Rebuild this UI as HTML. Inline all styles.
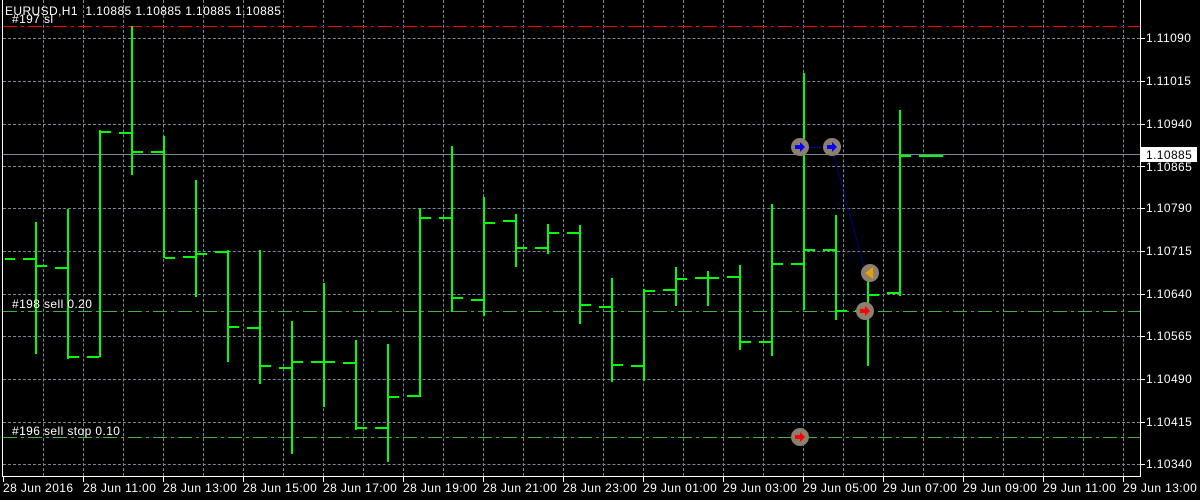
<!DOCTYPE html>
<html><head><meta charset="utf-8"><style>
html,body{margin:0;padding:0;background:#000;width:1200px;height:500px;overflow:hidden;position:relative}
div,b,i,s,u,span{position:absolute;display:block}
.t{font-family:"Liberation Sans",sans-serif;font-size:12px;letter-spacing:0.4px;color:#fff;white-space:nowrap;line-height:14px}
.h{left:3px;width:1137px;height:0;border-top:1px dashed #778899}
.vg{top:0;height:476px;width:0;border-left:1px dashed #778899}
b{background:#00ff00;width:2px}
i{background:#00ff00;height:2px;width:12px}
.c{width:18px;height:18px;border-radius:50%;background:#8c7f70}
.a{width:10px;height:10px;left:4px;top:4px;clip-path:polygon(0 30%,50% 30%,50% 0,100% 50%,50% 100%,50% 70%,0 70%)}
.yl{left:1146px}
.tk{left:1141px;width:4px;height:1px;background:#fff}
.dt{top:477px;width:1px;height:5px;background:#fff}
</style></head><body>
<div class="h" style="top:38px"></div><div class="h" style="top:81px"></div><div class="h" style="top:124px"></div><div class="h" style="top:166px"></div><div class="h" style="top:208px"></div><div class="h" style="top:251px"></div><div class="h" style="top:294px"></div><div class="h" style="top:336px"></div><div class="h" style="top:379px"></div><div class="h" style="top:422px"></div><div class="h" style="top:464px"></div>
<div class="vg" style="left:43px"></div><div class="vg" style="left:83px"></div><div class="vg" style="left:123px"></div><div class="vg" style="left:163px"></div><div class="vg" style="left:203px"></div><div class="vg" style="left:243px"></div><div class="vg" style="left:283px"></div><div class="vg" style="left:323px"></div><div class="vg" style="left:363px"></div><div class="vg" style="left:403px"></div><div class="vg" style="left:443px"></div><div class="vg" style="left:483px"></div><div class="vg" style="left:523px"></div><div class="vg" style="left:563px"></div><div class="vg" style="left:603px"></div><div class="vg" style="left:643px"></div><div class="vg" style="left:683px"></div><div class="vg" style="left:723px"></div><div class="vg" style="left:763px"></div><div class="vg" style="left:803px"></div><div class="vg" style="left:843px"></div><div class="vg" style="left:883px"></div><div class="vg" style="left:923px"></div><div class="vg" style="left:963px"></div><div class="vg" style="left:1003px"></div><div class="vg" style="left:1043px"></div><div class="vg" style="left:1083px"></div><div class="vg" style="left:1123px"></div>
<div style="left:3px;top:154px;width:1137px;height:1px;background:#778899"></div>
<div style="left:3px;top:26px;width:1137px;height:1px;background:repeating-linear-gradient(90deg,#ff0000 0 14px,transparent 14px 18px,#ff0000 18px 21px,transparent 21px 25px)"></div>
<div style="left:3px;top:311px;width:1137px;height:1px;background:repeating-linear-gradient(90deg,#3cb43c 0 14px,transparent 14px 18px,#3cb43c 18px 21px,transparent 21px 25px)"></div>
<div style="left:3px;top:437px;width:1137px;height:1px;background:repeating-linear-gradient(90deg,#3cb43c 0 14px,transparent 14px 18px,#3cb43c 18px 21px,transparent 21px 25px)"></div>

<i style="left:5px;top:258px;width:10px"></i>
<b style="left:35px;top:222px;height:132px"></b><i style="left:23px;top:258px"></i><i style="left:37px;top:265px;width:10px"></i>
<b style="left:67px;top:209px;height:150px"></b><i style="left:55px;top:267px"></i><i style="left:69px;top:356px;width:10px"></i>
<b style="left:99px;top:130px;height:227px"></b><i style="left:87px;top:356px"></i><i style="left:101px;top:131px;width:10px"></i>
<b style="left:131px;top:26px;height:149px"></b><i style="left:119px;top:132px"></i><i style="left:133px;top:151px;width:10px"></i>
<b style="left:163px;top:136px;height:122px"></b><i style="left:151px;top:151px"></i><i style="left:165px;top:257px;width:10px"></i>
<b style="left:195px;top:180px;height:117px"></b><i style="left:183px;top:256px"></i><i style="left:197px;top:253px;width:10px"></i>
<b style="left:227px;top:250px;height:112px"></b><i style="left:215px;top:251px"></i><i style="left:229px;top:326px;width:10px"></i>
<b style="left:259px;top:250px;height:134px"></b><i style="left:247px;top:327px"></i><i style="left:261px;top:365px;width:10px"></i>
<b style="left:291px;top:321px;height:133px"></b><i style="left:279px;top:367px"></i><i style="left:293px;top:361px;width:10px"></i>
<b style="left:323px;top:283px;height:124px"></b><i style="left:311px;top:361px"></i><i style="left:325px;top:361px;width:10px"></i>
<b style="left:355px;top:340px;height:90px"></b><i style="left:343px;top:362px"></i><i style="left:357px;top:427px;width:10px"></i>
<b style="left:387px;top:344px;height:118px"></b><i style="left:375px;top:427px"></i><i style="left:389px;top:396px;width:10px"></i>
<b style="left:419px;top:208px;height:189px"></b><i style="left:407px;top:395px"></i><i style="left:421px;top:217px;width:10px"></i>
<b style="left:451px;top:146px;height:166px"></b><i style="left:439px;top:217px"></i><i style="left:453px;top:297px;width:10px"></i>
<b style="left:483px;top:197px;height:119px"></b><i style="left:471px;top:299px"></i><i style="left:485px;top:222px;width:10px"></i>
<b style="left:515px;top:214px;height:53px"></b><i style="left:503px;top:220px"></i><i style="left:517px;top:247px;width:10px"></i>
<b style="left:547px;top:224px;height:30px"></b><i style="left:535px;top:247px"></i><i style="left:549px;top:232px;width:10px"></i>
<b style="left:579px;top:225px;height:99px"></b><i style="left:567px;top:232px"></i><i style="left:581px;top:304px;width:10px"></i>
<b style="left:611px;top:278px;height:104px"></b><i style="left:599px;top:306px"></i><i style="left:613px;top:364px;width:10px"></i>
<b style="left:643px;top:289px;height:92px"></b><i style="left:631px;top:365px"></i><i style="left:645px;top:290px;width:10px"></i>
<b style="left:675px;top:267px;height:39px"></b><i style="left:663px;top:289px"></i><i style="left:677px;top:278px;width:10px"></i>
<b style="left:707px;top:271px;height:35px"></b><i style="left:695px;top:277px"></i><i style="left:709px;top:277px;width:10px"></i>
<b style="left:739px;top:265px;height:85px"></b><i style="left:727px;top:276px"></i><i style="left:741px;top:341px;width:10px"></i>
<b style="left:771px;top:204px;height:152px"></b><i style="left:759px;top:341px"></i><i style="left:773px;top:263px;width:10px"></i>
<b style="left:803px;top:73px;height:237px"></b><i style="left:791px;top:263px"></i><i style="left:805px;top:249px;width:10px"></i>
<b style="left:835px;top:215px;height:105px"></b><i style="left:823px;top:249px"></i><i style="left:837px;top:310px;width:10px"></i>
<b style="left:867px;top:273px;height:93px"></b><i style="left:855px;top:310px"></i><i style="left:869px;top:294px;width:10px"></i>
<b style="left:899px;top:110px;height:186px"></b><i style="left:887px;top:292px"></i><i style="left:901px;top:155px;width:10px"></i>
<i style="left:919px;top:155px;width:24px"></i>

<div style="left:804px;top:147px;width:28px;height:0;border-top:1px dotted #0000ff"></div>
<div style="left:832px;top:147px;width:130px;height:0;border-top:1px dotted #0000ff;transform-origin:0 0;transform:rotate(74.8deg)"></div>
<div style="left:799px;top:430px;width:5px;height:1px;background:#f00"></div>

<div class="c" style="left:791px;top:138px"><div class="a" style="background:#0000ff"></div></div>
<div class="c" style="left:823px;top:138px"><div class="a" style="background:#0000ff"></div></div>
<div class="c" style="left:861px;top:264px"><div style="left:4px;top:3px;width:0;height:0;border-top:6px solid transparent;border-bottom:6px solid transparent;border-right:8px solid #e8a000"></div></div>
<div class="c" style="left:856px;top:302px"><div class="a" style="background:#ff0000"></div></div>
<div class="c" style="left:791px;top:428px"><div class="a" style="background:#ff0000"></div></div>

<div style="left:2px;top:0;width:1px;height:477px;background:#fff"></div>
<div style="left:1140px;top:0;width:1px;height:477px;background:#fff"></div>
<div style="left:2px;top:476px;width:1139px;height:1px;background:#fff"></div>
<div class="tk" style="top:38px"></div><div class="tk" style="top:81px"></div><div class="tk" style="top:124px"></div><div class="tk" style="top:166px"></div><div class="tk" style="top:208px"></div><div class="tk" style="top:251px"></div><div class="tk" style="top:294px"></div><div class="tk" style="top:336px"></div><div class="tk" style="top:379px"></div><div class="tk" style="top:422px"></div><div class="tk" style="top:464px"></div>
<div class="dt" style="left:3px"></div><div class="dt" style="left:83px"></div><div class="dt" style="left:163px"></div><div class="dt" style="left:243px"></div><div class="dt" style="left:323px"></div><div class="dt" style="left:403px"></div><div class="dt" style="left:483px"></div><div class="dt" style="left:563px"></div><div class="dt" style="left:643px"></div><div class="dt" style="left:723px"></div><div class="dt" style="left:803px"></div><div class="dt" style="left:883px"></div><div class="dt" style="left:963px"></div><div class="dt" style="left:1043px"></div><div class="dt" style="left:1123px"></div>

<span class="t" style="left:5px;top:4px">EURUSD,H1&nbsp; 1.10885 1.10885 1.10885 1.10885</span>
<span class="t" style="left:12px;top:12px">#197 sl</span>
<span class="t" style="left:12px;top:297px">#198 sell 0.20</span>
<span class="t" style="left:12px;top:424px">#196 sell stop 0.10</span>
<span class="t yl" style="top:31px">1.11090</span>
<span class="t yl" style="top:74px">1.11015</span>
<span class="t yl" style="top:117px">1.10940</span>
<span class="t yl" style="top:160px">1.10865</span>
<span class="t yl" style="top:201px">1.10790</span>
<span class="t yl" style="top:244px">1.10715</span>
<span class="t yl" style="top:287px">1.10640</span>
<span class="t yl" style="top:329px">1.10565</span>
<span class="t yl" style="top:372px">1.10490</span>
<span class="t yl" style="top:415px">1.10415</span>
<span class="t yl" style="top:457px">1.10340</span>
<div style="left:1141px;top:147px;width:56px;height:15px;background:#fff"></div>
<span class="t" style="left:1146px;top:148px;color:#000">1.10885</span>
<span class="t" style="left:3px;top:481px">28 Jun 2016</span>
<span class="t" style="left:83px;top:481px">28 Jun 11:00</span>
<span class="t" style="left:163px;top:481px">28 Jun 13:00</span>
<span class="t" style="left:243px;top:481px">28 Jun 15:00</span>
<span class="t" style="left:323px;top:481px">28 Jun 17:00</span>
<span class="t" style="left:403px;top:481px">28 Jun 19:00</span>
<span class="t" style="left:483px;top:481px">28 Jun 21:00</span>
<span class="t" style="left:563px;top:481px">28 Jun 23:00</span>
<span class="t" style="left:643px;top:481px">29 Jun 01:00</span>
<span class="t" style="left:723px;top:481px">29 Jun 03:00</span>
<span class="t" style="left:803px;top:481px">29 Jun 05:00</span>
<span class="t" style="left:883px;top:481px">29 Jun 07:00</span>
<span class="t" style="left:963px;top:481px">29 Jun 09:00</span>
<span class="t" style="left:1043px;top:481px">29 Jun 11:00</span>
<span class="t" style="left:1123px;top:481px">29 Jun 13:00</span>
</body></html>
